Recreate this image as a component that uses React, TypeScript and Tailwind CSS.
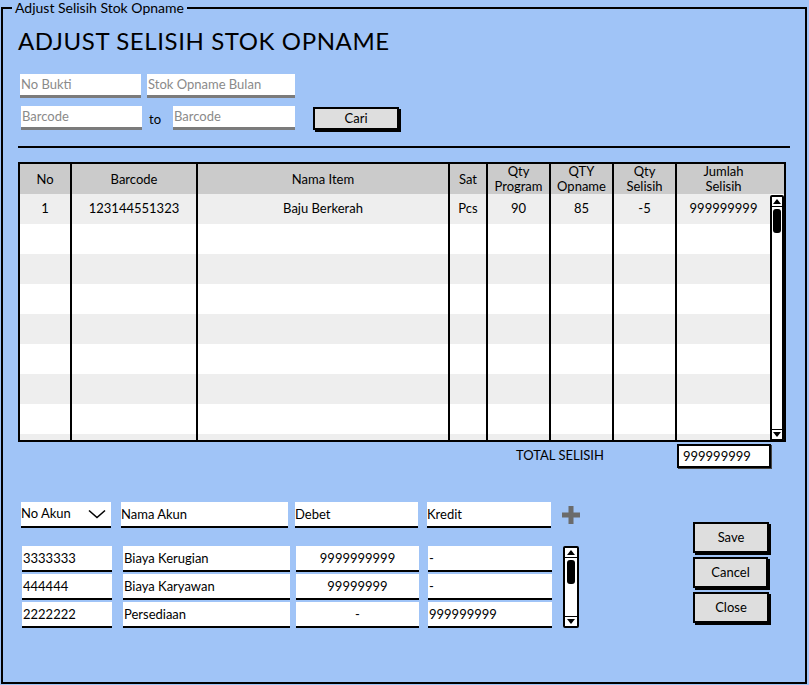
import React from "react";

const COLS = [
  { key: "no", label: ["No"], w: "w-[52px]" },
  { key: "barcode", label: ["Barcode"], w: "w-[126px]" },
  { key: "nama", label: ["Nama Item"], w: "w-[252px]" },
  { key: "sat", label: ["Sat"], w: "w-[38px]" },
  { key: "qp", label: ["Qty", "Program"], w: "w-[63px]" },
  { key: "qo", label: ["QTY", "Opname"], w: "w-[63px]" },
  { key: "qs", label: ["Qty", "Selisih"], w: "w-[63px]" },
  { key: "jml", label: ["Jumlah", "Selisih"], w: "w-[93px]" },
];

const ITEMS: Record<string, string>[] = [
  { no: "1", barcode: "123144551323", nama: "Baju Berkerah", sat: "Pcs", qp: "90", qo: "85", qs: "-5", jml: "999999999" },
];

const JURNAL = [
  { akun: "3333333", nama: "Biaya Kerugian", debet: "9999999999", kredit: "-" },
  { akun: "444444", nama: "Biaya Karyawan", debet: "99999999", kredit: "-" },
  { akun: "2222222", nama: "Persediaan", debet: "-", kredit: "999999999" },
];

function Placeholder({ text, className }: { text: string; className: string }) {
  return (
    <div className={`h-[24px] bg-white border-b-[3px] border-[#7b7b7b] text-[13px] leading-[21px] text-[#8a8a8a] pl-[1px] ${className}`}>
      {text}
    </div>
  );
}

function SketchButton({ label, className }: { label: string; className: string }) {
  return (
    <button className={`bg-[#dedede] border-2 border-black shadow-[2px_2px_0_#000] text-[13px] text-black ${className}`}>
      {label}
    </button>
  );
}

function Scrollbar({ className }: { className: string }) {
  return (
    <div className={`flex flex-col border-2 border-black bg-white rounded-[2px] ${className}`}>
      <div className="h-[10px] border-b border-black flex items-center justify-center">
        <div className="w-0 h-0 border-l-[4px] border-r-[4px] border-b-[5px] border-l-transparent border-r-transparent border-b-black" />
      </div>
      <div className="mx-auto mt-[2px] w-[8px] h-[24px] bg-black rounded-[3px]" />
      <div className="flex-1" />
      <div className="h-[10px] border-t border-black flex items-center justify-center">
        <div className="w-0 h-0 border-l-[4px] border-r-[4px] border-t-[5px] border-l-transparent border-r-transparent border-t-black" />
      </div>
    </div>
  );
}

export default function App() {
  const rows = Array.from({ length: 9 }, (_, i) => ITEMS[i] || null);

  return (
    <div className="w-[809px] h-[685px] bg-[#a0c4f7] font-['Lato','Noto_Sans',sans-serif] text-black overflow-hidden">
      <fieldset className="border-2 border-black ml-[1px] mr-[2px] h-[684px]">
        <legend className="ml-[9px] px-[3px] text-[14px] leading-[16px]">Adjust Selisih Stok Opname</legend>

        <div className="pl-[15px]">
          {/* Title */}
          <h1 className="mt-[10px] text-[24px] leading-[30px] tracking-[0.6px]">ADJUST SELISIH STOK OPNAME</h1>

          {/* Filter */}
          <div className="mt-[18px] ml-[2px] flex gap-[6px]">
            <Placeholder text="No Bukti" className="w-[121px]" />
            <Placeholder text="Stok Opname Bulan" className="w-[148px]" />
          </div>
          <div className="mt-[8px] ml-[3px] flex items-center">
            <Placeholder text="Barcode" className="w-[121px]" />
            <span className="ml-[7px] w-[24px] text-[13px] mt-[4px]">to</span>
            <Placeholder text="Barcode" className="w-[122px]" />
            <SketchButton label="Cari" className="ml-[18px] w-[86px] h-[23px] leading-[19px]" />
          </div>

          <div className="mt-[16px] h-[2px] w-[772px] bg-black" />

          {/* Table */}
          <div className="mt-[14px] w-[768px] border-2 border-black bg-white">
            <div className="flex h-[30px] bg-[#cbcbcb]">
              {COLS.map((c, i) => (
                <div
                  key={c.key}
                  className={`${c.w} ${i < COLS.length - 1 ? "border-r-2 border-black" : ""} flex flex-col items-center justify-center text-[13px] leading-[15px]`}
                >
                  {c.label.map((l) => (
                    <span key={l}>{l}</span>
                  ))}
                </div>
              ))}
            </div>
            <div className="flex h-[246px] overflow-hidden">
              <div className="w-[750px]">
                {rows.map((r, ri) => (
                  <div key={ri} className={`flex h-[30px] ${ri % 2 === 0 ? "bg-[#eeeeee]" : "bg-white"}`}>
                    {COLS.map((c, i) => (
                      <div
                        key={c.key}
                        className={`${c.w} ${i < COLS.length - 1 ? "border-r-2 border-black" : ""} flex items-center justify-center text-[13px]`}
                      >
                        {r ? r[c.key] : ""}
                      </div>
                    ))}
                  </div>
                ))}
              </div>
              <Scrollbar className="w-[15px] h-[246px] mt-[1px]" />
            </div>
          </div>

          {/* Total */}
          <div className="mt-[2px] flex items-center">
            <span className="ml-[498px] text-[13px]">TOTAL SELISIH</span>
            <div className="ml-[73px] w-[94px] h-[24px] border-2 border-black bg-white shadow-[1px_1px_0_#444] text-[13px] leading-[20px] pl-[4px]">
              999999999
            </div>
          </div>

          {/* Jurnal */}
          <div className="mt-[34px] flex">
            <div>
              <div className="ml-[3px] flex items-center">
                <div className="w-[90px] h-[26px] bg-white border-b-2 border-black flex items-center justify-between text-[13px] pr-[5px]">
                  <span>No Akun</span>
                  <svg width="18" height="10" viewBox="0 0 18 10" fill="none" stroke="black" strokeWidth="1.6">
                    <path d="M1 1.5 L9 8.5 L17 1.5" />
                  </svg>
                </div>
                <div className="ml-[10px] w-[167px] h-[26px] bg-white border-b-2 border-black text-[13px] leading-[24px]">Nama Akun</div>
                <div className="ml-[7px] w-[123px] h-[26px] bg-white border-b-2 border-black text-[13px] leading-[24px]">Debet</div>
                <div className="ml-[9px] w-[124px] h-[26px] bg-white border-b-2 border-black text-[13px] leading-[24px]">Kredit</div>
                <svg className="ml-[10px]" width="20" height="20" viewBox="0 0 20 20">
                  <path d="M10 1 V19 M1 10 H19" stroke="#6b6b6b" strokeWidth="5" />
                </svg>
              </div>
              <div className="mt-[18px] ml-[4px] flex">
                <div className="flex flex-col gap-[2px]">
                  {JURNAL.map((j) => (
                    <div key={j.akun} className="flex text-[13px]">
                      <div className="w-[90px] h-[26px] bg-white border-b-2 border-black leading-[24px] pl-[1px]">{j.akun}</div>
                      <div className="ml-[11px] w-[167px] h-[26px] bg-white border-b-2 border-black leading-[24px] pl-[1px]">{j.nama}</div>
                      <div className="ml-[6px] w-[123px] h-[26px] bg-white border-b-2 border-black leading-[24px] text-center">{j.debet}</div>
                      <div className="ml-[9px] w-[124px] h-[26px] bg-white border-b-2 border-black leading-[24px] pl-[1px]">{j.kredit}</div>
                    </div>
                  ))}
                </div>
                <Scrollbar className="ml-[11px] w-[16px] h-[82px]" />
              </div>
            </div>
            <div className="ml-[112px] mt-[20px] flex flex-col gap-[4px]">
              <SketchButton label="Save" className="w-[76px] h-[31px]" />
              <SketchButton label="Cancel" className="w-[75px] h-[31px]" />
              <SketchButton label="Close" className="w-[76px] h-[31px]" />
            </div>
          </div>
        </div>
      </fieldset>
    </div>
  );
}
